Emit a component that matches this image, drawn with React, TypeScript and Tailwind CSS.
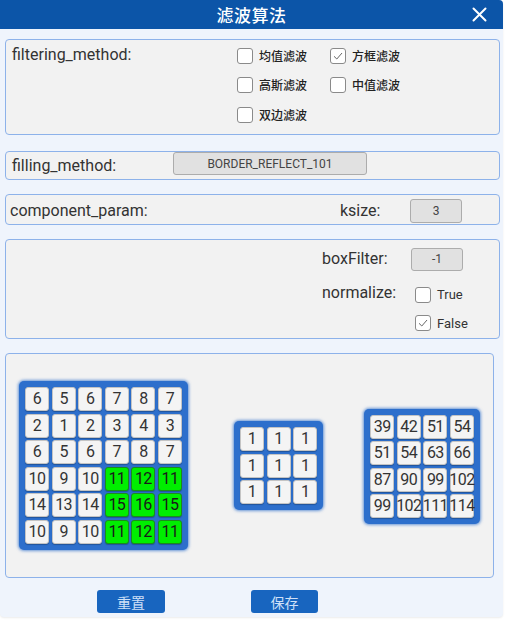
import React from "react";

const latin = "font-['Roboto','Noto_Sans','Noto_Sans_CJK_SC',sans-serif]";
const cjk = "font-['Noto_Sans_CJK_SC','Noto_Sans',sans-serif]";

function Check({ checked }: { checked?: boolean }) {
  return (
    <div className="w-[16px] h-[16px] rounded-[3px] border border-[#8a8a8a] bg-white flex items-center justify-center shrink-0">
      {checked && (
        <svg width="12" height="12" viewBox="0 0 12 12">
          <path d="M2 6.3 L4.8 9 L10 3" fill="none" stroke="#666" strokeWidth="1" />
        </svg>
      )}
    </div>
  );
}

function CbLabel({ label, checked }: { label: string; checked?: boolean }) {
  return (
    <div className="flex items-center h-[29.5px]">
      <Check checked={checked} />
      <span className={`${cjk} ml-[6px] text-[12px] font-medium text-[#222] leading-none`}>{label}</span>
    </div>
  );
}

function Cell({ v, green }: { v: number; green?: boolean }) {
  return (
    <div
      className={`w-[24px] h-[24px] rounded-[3px] flex items-center justify-center text-[16px] leading-none tracking-[-0.6px] ${latin} ${
        green
          ? "bg-[#00ee00] border border-[#1c8a1c] text-[#1a1a1a]"
          : "bg-[#f4f4f4] border border-[#c4c4c4] text-[#333]"
      } shadow-[0_1px_1px_rgba(0,0,0,0.25)]`}
    >
      {v}
    </div>
  );
}

function Grid({ data, cols, green }: { data: number[]; cols: number; green?: (i: number) => boolean }) {
  const colClass = cols === 6 ? "grid-cols-6" : cols === 4 ? "grid-cols-4" : "grid-cols-3";
  return (
    <div className="bg-[#2d6fcc] rounded-[5px] p-[6px] shadow-[0_0_3px_1px_rgba(45,111,204,0.7)]">
      <div className={`grid ${colClass} gap-[2.6px]`}>
        {data.map((v, i) => (
          <Cell key={i} v={v} green={green ? green(i) : false} />
        ))}
      </div>
    </div>
  );
}

export default function App() {
  const g1 = [6, 5, 6, 7, 8, 7, 2, 1, 2, 3, 4, 3, 6, 5, 6, 7, 8, 7, 10, 9, 10, 11, 12, 11, 14, 13, 14, 15, 16, 15, 10, 9, 10, 11, 12, 11];
  const g2 = [1, 1, 1, 1, 1, 1, 1, 1, 1];
  const g3 = [39, 42, 51, 54, 51, 54, 63, 66, 87, 90, 99, 102, 99, 102, 111, 114];
  const panel = "border border-[#8db2ea] rounded-[4px] bg-[#f2f2f2]";
  const box = "bg-[#e1e1e1] border border-[#acacac] rounded-[3px] flex items-center justify-center text-[12px] text-[#444]";
  const lbl = `${latin} text-[16px] text-[#333]`;

  return (
    <div className="w-[507px] h-[620px] bg-white">
      <div className="w-[503px] h-[617px] bg-[#eff4fc] rounded-b-[4px] rounded-tr-[4px] flex flex-col shadow-[0_1px_2px_rgba(0,0,0,0.08)]">
        {/* title */}
        <div className="h-[29px] bg-[#0c55a8] rounded-tr-[4px] relative flex items-center justify-center shrink-0">
          <span className={`${cjk} text-white text-[17px] font-medium tracking-[0.5px] leading-none`}>滤波算法</span>
          <svg className="absolute right-[16px] top-[7px]" width="15" height="15" viewBox="0 0 15 15">
            <path d="M1.5 1.5 L13.5 13.5 M13.5 1.5 L1.5 13.5" stroke="white" strokeWidth="2" strokeLinecap="round" />
          </svg>
        </div>

        <div className="px-[5px] flex flex-col">
          {/* panel 1 */}
          <div className={`${panel} mt-[10px] h-[96px] w-[495px] flex items-start`}>
            <div className={`${lbl} w-[231px] pl-[6px] pt-[3px]`}>filtering_method:</div>
            <div className="grid grid-cols-[93px_auto] content-start pt-[1px]">
              <CbLabel label="均值滤波" />
              <CbLabel label="方框滤波" checked />
              <CbLabel label="高斯滤波" />
              <CbLabel label="中值滤波" />
              <CbLabel label="双边滤波" />
            </div>
          </div>

          {/* panel 2 */}
          <div className={`${panel} mt-[16px] h-[29px] w-[495px] flex`}>
            <div className={`${lbl} w-[167px] pl-[6px] self-center`}>filling_method:</div>
            <div className={`${box} ${latin} w-[194px] h-[23px]`}>BORDER_REFLECT_101</div>
          </div>

          {/* panel 3 */}
          <div className={`${panel} mt-[14px] h-[31px] w-[495px] flex items-center pt-[3px]`}>
            <div className={`${lbl} w-[334px] pl-[4px]`}>component_param:</div>
            <div className={`${lbl} w-[70px]`}>ksize:</div>
            <div className={`${box} ${latin} w-[52px] h-[24px]`}>3</div>
          </div>

          {/* panel 4 */}
          <div className={`${panel} mt-[14px] h-[100px] w-[495px] flex flex-col pl-[316px] pt-[7px]`}>
            <div className="flex items-center">
              <div className={`${lbl} w-[89px]`}>boxFilter:</div>
              <div className={`${box} ${latin} w-[52px] h-[23px]`}>-1</div>
            </div>
            <div className="flex mt-[13px]">
              <div className={`${lbl} w-[93px] leading-none pt-[1px]`}>normalize:</div>
              <div className="flex flex-col gap-[9px] pt-[1px]">
                <div className="flex items-center">
                  <Check />
                  <span className={`${latin} ml-[6px] text-[13px] text-[#333]`}>True</span>
                </div>
                <div className="flex items-center">
                  <Check checked />
                  <span className={`${latin} ml-[6px] text-[13px] text-[#333]`}>False</span>
                </div>
              </div>
            </div>
          </div>

          {/* panel 5 */}
          <div className={`${panel} mt-[14px] h-[225px] w-[489px] flex items-center pl-[13px]`}>
            <Grid data={g1} cols={6} green={(i) => Math.floor(i / 6) >= 3 && i % 6 >= 3} />
            <div className="ml-[46px]">
              <Grid data={g2} cols={3} />
            </div>
            <div className="ml-[41px] mt-[2px]">
              <Grid data={g3} cols={4} />
            </div>
          </div>

          {/* buttons */}
          <div className="flex mt-[12px]">
            <button className={`${cjk} ml-[92px] w-[68px] h-[23px] rounded-[3px] bg-[#1865bf] text-[#cfe0f7] text-[14px] leading-none`}>重置</button>
            <button className={`${cjk} ml-[86px] w-[67px] h-[23px] rounded-[3px] bg-[#1865bf] text-[#cfe0f7] text-[14px] leading-none`}>保存</button>
          </div>
        </div>
      </div>
    </div>
  );
}
